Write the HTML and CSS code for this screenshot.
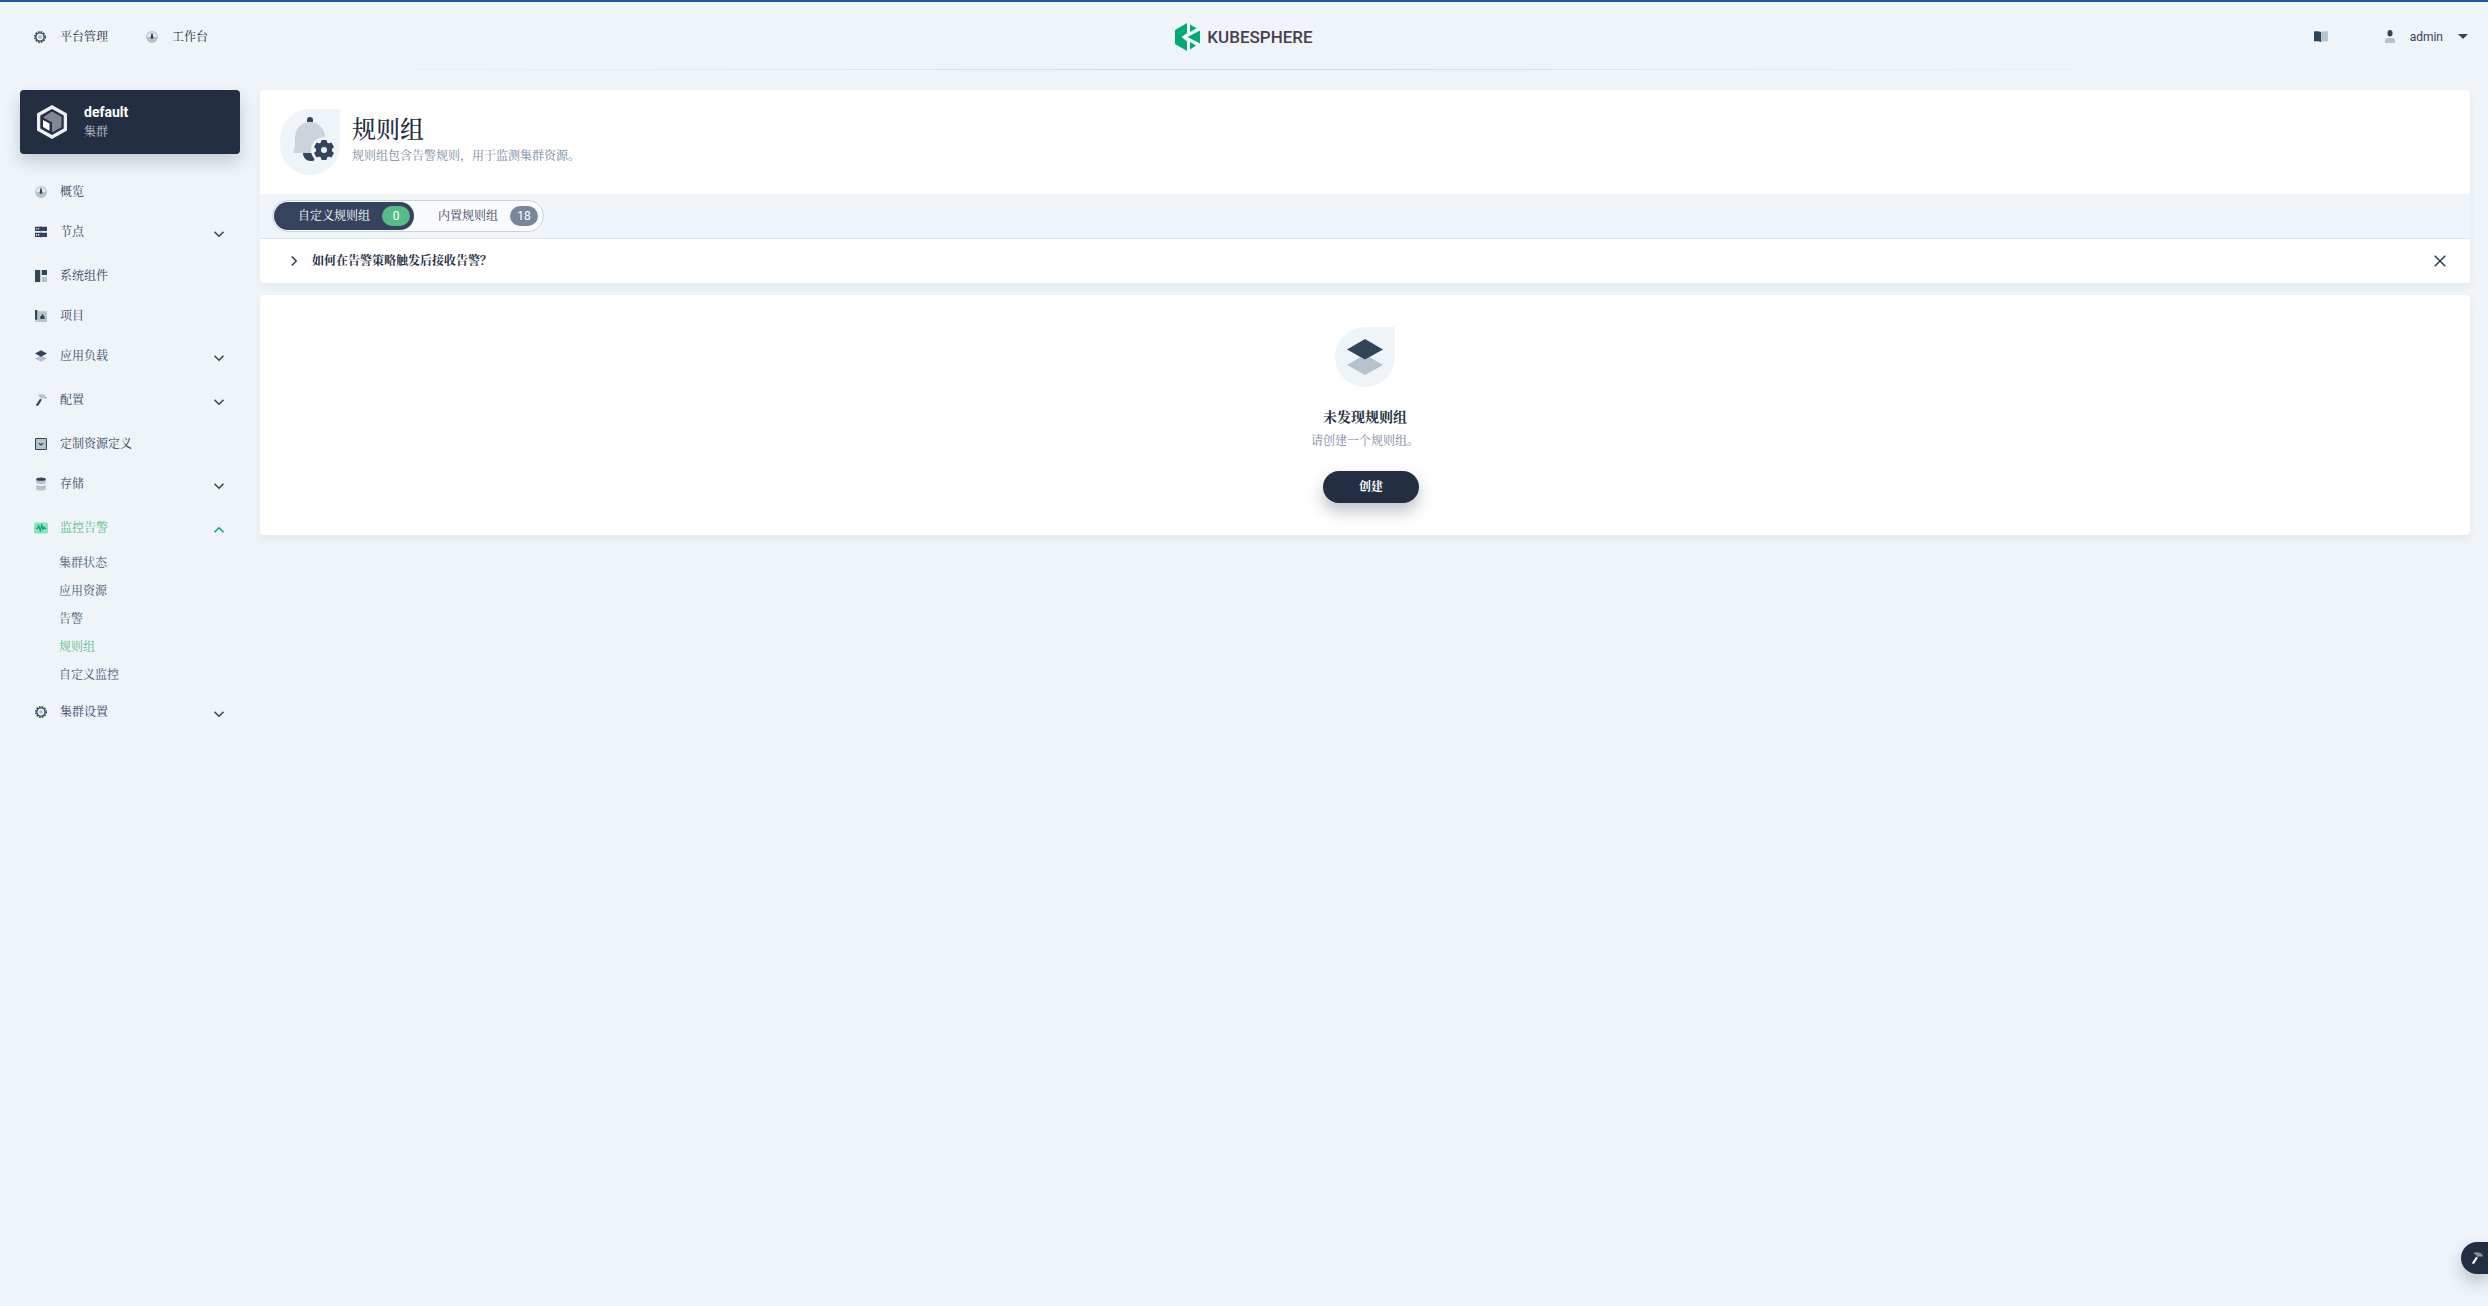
FILE: index.html
```html
<!DOCTYPE html>
<html lang="zh-CN">
<head>
    <meta charset="UTF-8">
    <meta name="viewport" content="width=device-width, initial-scale=1.0">
    <title>规则组 - KubeSphere</title>
    <link rel="stylesheet" href="styles.css">
</head>
<body>
    <svg class="sprite" aria-hidden="true">
        <symbol id="i-gear" viewBox="0 0 16 16">
            <circle cx="8" cy="8" r="7" fill="none" stroke="#324558" stroke-width="2" stroke-dasharray="2.200 1.465"/>
            <circle cx="8" cy="8" r="5.500" fill="none" stroke="#324558" stroke-width="1.800"/>
            <circle cx="8" cy="8" r="2.800" fill="#b6c2cd"/>
        </symbol>
        <symbol id="i-gauge" viewBox="0 0 16 16">
            <circle cx="8" cy="8" r="7.2" fill="#e3e9ef" stroke="#b6c2cd" stroke-width="1.4"/>
            <path d="M1 8h14a7 7 0 0 1-14 0z" fill="#b6c2cd"/>
            <path d="M7.2 3h1.6l.9 5.4a1.8 1.8 0 1 1-3.4 0z" fill="#324558"/>
        </symbol>
        <symbol id="i-nodes" viewBox="0 0 16 16">
            <path d="M7 0h2v16H7z" fill="#b6c2cd"/>
            <path d="M0 1h16v5.5H0zM0 9h16v5.5H0z" fill="#324558"/>
            <path d="M1.5 3h1.4v1.6H1.5zM4.2 3h1.4v1.6H4.2zM1.5 10.500h1.4v2.500H1.5zM4.200 10.500h1.400v2.500H4.200z" fill="#fff"/>
        </symbol>
        <symbol id="i-components" viewBox="0 0 16 16">
            <path d="M0 0h6.800v16H0zM9 0h7v6.800H9z" fill="#324558"/>
            <path d="M9 9h7v7H9z" fill="#b6c2cd"/>
            <path d="M6.800 0h1v16h-1z" fill="#b6c2cd"/>
        </symbol>
        <symbol id="i-project" viewBox="0 0 16 16">
            <path d="M4 1.500h12V16H0v-2.500h4z" fill="#b6c2cd"/>
            <path d="M0 0h3.200v13H0zM7 8.500l1.800-1L9.500 5l1.500 1.500L12.500 8.500 13 12H7z" fill="#324558"/>
        </symbol>
        <symbol id="i-layers" viewBox="0 0 16 16">
            <path d="M8 7l8 4.300L8 15.600 0 11.300z" fill="#b6c2cd"/>
            <path d="M8 .400l8 4.300L8 9 0 4.700z" fill="#324558"/>
        </symbol>
        <symbol id="i-hammer" viewBox="0 0 16 16">
            <path class="head" d="M2.500 1.500C6-.200 10-.300 13 1.500l3 3-1.800 2.300-2.300-1.300-2.600 1-2.600-2.200C6 3 4.500 2 2.500 1.500z"/>
            <path class="handle" d="M6.700 6.200l2.500 1.300L4 16 1 15z"/>
        </symbol>
        <symbol id="i-crd" viewBox="0 0 16 16">
            <rect x=".7" y=".7" width="14.600" height="14.600" rx="1" fill="#b6c2cd" stroke="#324558" stroke-width="1.400"/>
            <path d="M5.300 7L8 9.200 10.700 7" fill="none" stroke="#324558" stroke-width="1.500"/>
        </symbol>
        <symbol id="i-storage" viewBox="0 0 16 18">
            <path d="M1.500 3v4c0 3 13 3 13 0V3zM1.500 10v5.500c0 3 13 3 13 0V10c0 2-13 2-13 0z" fill="#b6c2cd"/>
            <ellipse cx="8" cy="2.500" rx="6.500" ry="2.300" fill="#324558"/>
        </symbol>
        <symbol id="i-monitor" viewBox="0 0 18 14">
            <rect width="18" height="14" rx="2" fill="#90e0c5"/>
            <path d="M2.500 7.500h2L6 4l2 6.500L10 3l1.500 6L13 6l.8 1.500h2" fill="none" stroke="#00aa72" stroke-width="1.600"/>
        </symbol>
        <symbol id="i-down" viewBox="0 0 12 12">
            <path d="M1.500 3.800L6 8.200l4.500-4.400" fill="none" stroke="currentColor" stroke-width="1.600"/>
        </symbol>
        <symbol id="i-leaf" viewBox="0 0 60 60">
            <path d="M30 0h30v30a30 30 0 1 1-30-30z" fill="#eff4f9"/>
        </symbol>
    </svg>

    <header class="header">
        <nav class="header-nav">
            <a href="#"><svg class="icon"><use href="#i-gear"/></svg>平台管理</a>
            <a href="#"><svg class="icon"><use href="#i-gauge"/></svg>工作台</a>
        </nav>
        <a class="logo" href="#">
            <svg width="25" height="28" viewBox="0 0 25 28">
                <path d="M12 0v10L6.500 14l5.500 4.500V28L0 21V7z" fill="#00aa72"/>
                <path d="M15 1.500l6.500 3.800L15 9zM25 7.500v13L12.500 14zM15 19l6 3.500-6 4z" fill="#00aa72"/>
            </svg>
            <span>KUBESPHERE</span>
        </a>
        <div class="header-right">
            <a class="docs" href="#" aria-label="文档">
                <svg width="14" height="11" viewBox="0 0 14 11">
                    <path d="M0 .5C2.500 0 5 0 7 1v10c-2-1-4.500-1-7-.5z" fill="#324558"/>
                    <path d="M14 .5C11.500 0 9 0 7 1v10c2-1 4.500-1 7-.5z" fill="#b6c2cd"/>
                </svg>
            </a>
            <button class="user" type="button">
                <svg width="10" height="13" viewBox="0 0 10 13">
                    <path d="M0 13v-2.500C0 8.500 1.500 8 3 8h4c1.500 0 3 .5 3 2.500V13z" fill="#b6c2cd"/>
                    <ellipse cx="5" cy="3.300" rx="2.500" ry="3.200" fill="#324558"/>
                </svg>
                <span>admin</span>
                <svg width="10" height="5" viewBox="0 0 10 5"><path d="M0 0h10L5 5z" fill="#324558"/></svg>
            </button>
        </div>
    </header>

    <div class="layout">
        <aside class="sidebar">
            <a class="cluster" href="#">
                <svg width="30" height="34" viewBox="0 0 30 34">
                    <path d="M15 0l15 8.500v17L15 34 0 25.500v-17z" fill="#eceef0"/>
                    <path d="M15 4l11.700 6.600v12.800L15 30 3.300 23.400V10.600z" fill="#242e42"/>
                    <path d="M15 6.500l9.500 5.300v10.400L15 27.500v-10l-9-5.200z" fill="#808693"/>
                    <path d="M6 15l6.500 3.500v7.200L6 22z" fill="#fff"/>
                </svg>
                <div>
                    <strong>default</strong>
                    <span>集群</span>
                </div>
            </a>
            <ul class="menu">
                <li><a href="#"><svg class="icon"><use href="#i-gauge"/></svg>概览</a></li>
                <li class="group"><a href="#"><svg class="icon"><use href="#i-nodes"/></svg>节点<svg class="arrow"><use href="#i-down"/></svg></a></li>
                <li><a href="#"><svg class="icon"><use href="#i-components"/></svg>系统组件</a></li>
                <li><a href="#"><svg class="icon"><use href="#i-project"/></svg>项目</a></li>
                <li class="group"><a href="#"><svg class="icon"><use href="#i-layers"/></svg>应用负载<svg class="arrow"><use href="#i-down"/></svg></a></li>
                <li class="group"><a href="#"><svg class="icon"><use href="#i-hammer"/></svg>配置<svg class="arrow"><use href="#i-down"/></svg></a></li>
                <li><a href="#"><svg class="icon"><use href="#i-crd"/></svg>定制资源定义</a></li>
                <li class="group"><a href="#"><svg class="icon tall"><use href="#i-storage"/></svg>存储<svg class="arrow"><use href="#i-down"/></svg></a></li>
                <li class="group open">
                    <a href="#"><svg class="icon wide"><use href="#i-monitor"/></svg>监控告警<svg class="arrow"><use href="#i-down"/></svg></a>
                    <ul class="submenu">
                        <li><a href="#">集群状态</a></li>
                        <li><a href="#">应用资源</a></li>
                        <li><a href="#">告警</a></li>
                        <li><a class="active" href="#">规则组</a></li>
                        <li><a href="#">自定义监控</a></li>
                    </ul>
                </li>
                <li class="group"><a href="#"><svg class="icon"><use href="#i-gear"/></svg>集群设置<svg class="arrow"><use href="#i-down"/></svg></a></li>
            </ul>
        </aside>

        <main class="content">
            <section class="panel">
                <div class="banner">
                    <svg width="60" height="66" viewBox="0 0 60 66">
                        <path d="M30 0h30v36a30 30 0 0 1-60 0v-6A30 30 0 0 1 30 0z" fill="#eff4f9"/>
                        <path d="M27 13v-2a3 3 0 0 1 6 0v2zM23 44h14l-3 7.500c-6 2-11-2-11-7.500z" fill="#36435c"/>
                        <path d="M15 28a15 15 0 0 1 30 0v10l2 6H13l2-6z" fill="#ccd3db"/>
                        <circle cx="44" cy="41" r="13" fill="#eff4f9"/>
                        <circle cx="44" cy="41" r="5.500" fill="none" stroke="#36435c" stroke-width="5"/>
                        <path d="M41.500 31h5l1 4h-7zM41.500 51h5l1-4h-7zM34 38l2.500-4.500 4 1.200-3.500 6zM54 38l-2.500-4.500-4 1.200 3.500 6zM34 44l2.500 4.500 4-1.200-3.500-6zM54 44l-2.500 4.500-4-1.200 3.500-6z" fill="#36435c"/>
                    </svg>
                    <div>
                        <h1>规则组</h1>
                        <p>规则组包含告警规则，用于监测集群资源。</p>
                    </div>
                </div>
                <div class="tabs-bar">
                    <div class="tabs">
                        <button class="tab active" type="button">自定义规则组<span class="count">0</span></button>
                        <button class="tab" type="button">内置规则组<span class="count">18</span></button>
                    </div>
                </div>
                <div class="tip">
                    <button class="tip-title" type="button"><svg class="arrow"><use href="#i-down"/></svg>如何在告警策略触发后接收告警？</button>
                    <button class="close" type="button" aria-label="关闭">
                        <svg width="12" height="12" viewBox="0 0 12 12"><path d="M.700.700l10.600 10.600M11.300.700L.700 11.300" stroke="#324558" stroke-width="1.600"/></svg>
                    </button>
                </div>
            </section>

            <section class="panel empty">
                <div class="empty-icon">
                    <svg class="leaf"><use href="#i-leaf"/></svg>
                    <svg class="layers" viewBox="0 0 36 36">
                        <path d="M18 15.500L36 26 18 36 0 26z" fill="#b6c2cd"/>
                        <path d="M18 0l18 10.500L18 20.500 0 10.500z" fill="#324558"/>
                    </svg>
                </div>
                <h2>未发现规则组</h2>
                <p>请创建一个规则组。</p>
                <button class="create" type="button">创建</button>
            </section>
        </main>
    </div>

    <button class="toolbox" type="button" aria-label="工具箱"><svg class="icon"><use href="#i-hammer"/></svg></button>
</body>
</html>
```
FILE: styles.css
```css
* {
    box-sizing: border-box;
}
body {
    --head: #b6c2cd;
    --handle: #324558;
    margin: 0;
    min-height: 100vh;
    background-color: #eff4f9;
    border-top: 2px solid #1f5aa3;
    color: #36435c;
    font-family: Roboto, "Noto Serif CJK SC", "Noto Sans CJK SC", serif;
    font-size: 12px;
    line-height: 20px;
}
a {
    color: inherit;
    text-decoration: none;
}
button {
    border: none;
    background: none;
    padding: 0;
    color: inherit;
    font: inherit;
    cursor: pointer;
}
ul {
    list-style: none;
    margin: 0;
    padding: 0;
}
h1, h2, p {
    margin: 0;
}
.sprite {
    display: none;
}
.icon {
    width: 12px;
    height: 12px;
    flex: none;
}
.arrow {
    width: 12px;
    height: 12px;
    flex: none;
    color: #324558;
}
.head {
    fill: var(--head);
}
.handle {
    fill: var(--handle);
}

/* header */
.header {
    display: grid;
    grid-template-columns: 1fr auto 1fr;
    align-items: center;
    height: 68px;
    padding: 2px 20px 0;
    border-bottom: 1px solid;
    border-image: linear-gradient(to right, #eff4f9 10%, #d5dde5 45%, #d5dde5 55%, #eff4f9 90%) 1;
}
.header-nav {
    display: flex;
    gap: 38px;
    padding-left: 14px;
}
.header-nav a {
    display: flex;
    align-items: center;
    gap: 14px;
    color: #242e42;
}
.logo {
    display: flex;
    align-items: center;
    gap: 7px;
    color: #483e50;
    font-size: 17px;
    font-weight: 500;
}
.header-right {
    display: flex;
    justify-content: flex-end;
    align-items: center;
    gap: 57px;
}
.docs,
.user {
    display: flex;
    align-items: center;
}
.user span {
    margin: 0 15px;
}

/* layout */
.layout {
    display: flex;
    gap: 20px;
    padding: 20px 18px 20px 20px;
}
.sidebar {
    flex: none;
    width: 220px;
}
.cluster {
    display: flex;
    align-items: center;
    gap: 17px;
    height: 64px;
    padding: 0 17px;
    border-radius: 4px;
    background-color: #242e42;
    box-shadow: 0 8px 16px rgba(36, 46, 66, 0.2);
    color: #c1c9d1;
}
.cluster strong,
.cluster span {
    display: block;
}
.cluster strong {
    color: #fff;
    font-size: 14px;
}
.menu {
    margin-top: 18px;
}
.menu a {
    display: flex;
    align-items: center;
    height: 40px;
    padding: 0 15px;
    gap: 14px;
    color: #36435c;
}
.menu .icon {
    margin: 0 -1px 0 0;
}
.menu .tall {
    height: 14px;
}
.menu .wide {
    width: 14px;
    margin: 0 -2px 0 -1px;
}
.menu .arrow {
    margin: 4px 0 0 auto;
}
.menu .group {
    padding-bottom: 4px;
}
.menu .open {
    padding-bottom: 3px;
}
.menu .open > a,
.menu .submenu .active {
    color: #55bc8a;
}
.open .arrow {
    color: #00aa72;
    transform: rotate(180deg);
}
.submenu {
    padding-top: 1px;
}
.menu .submenu a {
    height: 28px;
    padding-left: 39px;
    color: #4a5974;
}

.content {
    flex: 1;
    min-width: 0;
}
.panel {
    margin-bottom: 12px;
    border-radius: 4px;
    background-color: #fff;
    box-shadow: 0 4px 8px rgba(36, 46, 66, 0.06);
    overflow: hidden;
}
.banner {
    display: flex;
    gap: 12px;
    padding: 19px 20px;
    color: #79879c;
}
.banner h1 {
    margin-top: 5px;
    color: #242e42;
    font-size: 24px;
    font-weight: 500;
    line-height: 32px;
}
.tabs-bar {
    display: flex;
    height: 45px;
    padding: 6px 12px;
    background-color: #eff4f9;
    border-bottom: 1px solid #dde4ec;
}
.tabs {
    display: flex;
    align-items: center;
    height: 32px;
    padding: 0 1px;
    border: 1px solid #ccd3db;
    border-radius: 16px;
    background-color: #f9fbfd;
}
.tab {
    display: flex;
    align-items: center;
    gap: 12px;
    height: 28px;
    padding: 0 4px 0 24px;
    border-radius: 14px;
}
.tab.active {
    background-color: #36435c;
    color: #fff;
}
.count {
    width: 28px;
    border-radius: 10px;
    background-color: #79879c;
    color: #fff;
}
.active .count {
    background-color: #55bc8a;
}
.tip {
    display: flex;
    justify-content: space-between;
    align-items: center;
    height: 44px;
    padding: 0 24px 0 28px;
}
.tip-title {
    display: flex;
    align-items: center;
    gap: 12px;
    color: #242e42;
    font-weight: 700;
}
.tip .arrow {
    transform: rotate(-90deg);
}
.close {
    display: flex;
}

/* empty state */
.empty {
    display: flex;
    flex-direction: column;
    align-items: center;
    padding: 32px 20px;
    color: #79879c;
}
.empty-icon {
    display: grid;
    place-items: center;
    margin-bottom: 20px;
}
.empty-icon svg {
    grid-area: 1 / 1;
}
.leaf {
    width: 60px;
    height: 60px;
}
.layers {
    width: 36px;
    height: 36px;
}
.empty h2 {
    color: #242e42;
    font-size: 14px;
    font-weight: 700;
    line-height: 20px;
}
.empty p {
    margin: 4px 0 20px;
}
.create {
    width: 96px;
    height: 32px;
    margin-left: 12px;
    border-radius: 16px;
    background-color: #242e42;
    box-shadow: 0 8px 16px rgba(36, 46, 66, 0.3);
    color: #fff;
    font-weight: 700;
}

.toolbox {
    --head: #8a919d;
    --handle: #fff;
    position: fixed;
    right: 0;
    bottom: 32px;
    display: flex;
    align-items: center;
    width: 27px;
    height: 32px;
    padding-left: 10px;
    border-radius: 16px 0 0 16px;
    background-color: #242e42;
    box-shadow: 0 8px 16px rgba(36, 46, 66, 0.25);
}
```
